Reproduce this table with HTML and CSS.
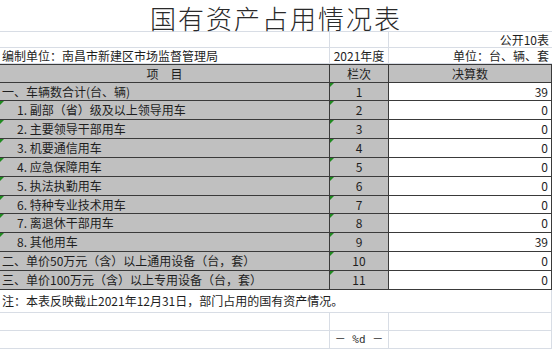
FILE: index.html
```html
<!DOCTYPE html>
<html lang="zh-CN">
<head>
<meta charset="utf-8">
<title>国有资产占用情况表</title>
<link rel="stylesheet" href="styles.css">
</head>
<body>
<div class="sheet">
  <div class="title">国有资产占用情况表</div>

  <div class="row light h16">
    <div class="c1"></div>
    <div class="c2 lv"></div>
    <div class="c3 lv right">公开10表</div>
  </div>
  <div class="row light h16">
    <div class="c1 left">编制单位：南昌市新建区市场监督管理局</div>
    <div class="c2 lv center">2021年度</div>
    <div class="c3 lv right">单位：台、辆、套</div>
  </div>

  <div class="row head h18">
    <div class="c1 center gray">项　目</div>
    <div class="c2 dv center gray">栏次</div>
    <div class="c3 dv center gray">决算数</div>
  </div>

  <div class="row data h18">
    <div class="c1 gray left">一、车辆数合计(台、辆)</div>
    <div class="c2 dv gray center mark">1</div>
    <div class="c3 dv num">39</div>
  </div>
  <div class="row data h19">
    <div class="c1 gray sub mark">1. 副部（省）级及以上领导用车</div>
    <div class="c2 dv gray center mark">2</div>
    <div class="c3 dv num">0</div>
  </div>
  <div class="row data h19">
    <div class="c1 gray sub mark">2. 主要领导干部用车</div>
    <div class="c2 dv gray center mark">3</div>
    <div class="c3 dv num">0</div>
  </div>
  <div class="row data h19">
    <div class="c1 gray sub mark">3. 机要通信用车</div>
    <div class="c2 dv gray center mark">4</div>
    <div class="c3 dv num">0</div>
  </div>
  <div class="row data h19">
    <div class="c1 gray sub mark">4. 应急保障用车</div>
    <div class="c2 dv gray center mark">5</div>
    <div class="c3 dv num">0</div>
  </div>
  <div class="row data h19">
    <div class="c1 gray sub mark">5. 执法执勤用车</div>
    <div class="c2 dv gray center mark">6</div>
    <div class="c3 dv num">0</div>
  </div>
  <div class="row data h18">
    <div class="c1 gray sub mark">6. 特种专业技术用车</div>
    <div class="c2 dv gray center mark">7</div>
    <div class="c3 dv num">0</div>
  </div>
  <div class="row data h19">
    <div class="c1 gray sub mark">7. 离退休干部用车</div>
    <div class="c2 dv gray center mark">8</div>
    <div class="c3 dv num">0</div>
  </div>
  <div class="row data h19">
    <div class="c1 gray sub mark">8. 其他用车</div>
    <div class="c2 dv gray center mark">9</div>
    <div class="c3 dv num">39</div>
  </div>
  <div class="row data h19">
    <div class="c1 gray left">二、单价50万元（含）以上通用设备（台，套）</div>
    <div class="c2 dv gray center mark">10</div>
    <div class="c3 dv num">0</div>
  </div>
  <div class="row data h19">
    <div class="c1 gray left">三、单价100万元（含）以上专用设备（台，套）</div>
    <div class="c2 dv gray center mark">11</div>
    <div class="c3 dv num">0</div>
  </div>

  <div class="row note h23">
    <div class="span left">注：本表反映截止2021年12月31日，部门占用的国有资产情况。</div>
  </div>
  <div class="row light h18">
    <div class="c1"></div>
    <div class="c2 lv"></div>
    <div class="c3 lv lr"></div>
  </div>
  <div class="row light h18">
    <div class="c1"></div>
    <div class="c2 lv center page">－ %d －</div>
    <div class="c3 lv lr"></div>
  </div>
</div>
</body>
</html>
```

FILE: styles.css
```css
html, body {
  margin: 0;
  padding: 0;
  background: #ffffff;
}

body {
  font-family: "Noto Sans CJK SC", "DejaVu Sans", sans-serif;
  font-size: 12px;
  color: #1e1e1e;
}

.sheet {
  width: 553px;
}

.title {
  height: 32px;
  box-sizing: border-box;
  border-bottom: 1px solid #d8dde5;
  text-align: center;
  font-size: 26px;
  font-weight: 300;
  line-height: 36px;
  color: #2a2a2a;
  letter-spacing: 2px;
  width: 552px;
  white-space: nowrap;
}

.row {
  display: grid;
  grid-template-columns: 329px 59px 164px;
  box-sizing: border-box;
  width: 552px;
}

.h16 { height: 16px; line-height: 15px; }
.h18 { height: 18px; line-height: 17px; }
.h19 { height: 19px; line-height: 18px; }
.h23 { height: 23px; line-height: 22px; }

.row.light {
  border-bottom: 1px solid #d8dde5;
}

.row.head {
  border-top: 1px solid #3a3a3a;
  border-bottom: 1px solid #3a3a3a;
  height: 19px;
}

.row.data {
  border-bottom: 1px solid #3a3a3a;
}

.row.note {
  display: block;
  border-bottom: 1px solid #d8dde5;
  border-right: 1px solid #d8dde5;
}

.c1, .c2, .c3, .span {
  position: relative;
  white-space: nowrap;
  overflow: visible;
}

.lv { border-left: 1px solid #d8dde5; }
.lr { border-right: 1px solid #d8dde5; }
.dv { border-left: 1px solid #3a3a3a; }

.row.data .c3, .row.head .c3 { border-right: 1px solid #3a3a3a; }

.gray { background: #c0c0c0; }

.left { padding-left: 2px; }
.sub { padding-left: 17px; }
.center { text-align: center; }
.right { text-align: right; padding-right: 3px; }
.num { text-align: right; padding-right: 3px; }

.page {
  font-family: "DejaVu Sans Mono", "Noto Sans CJK SC", monospace;
  font-size: 11px;
  color: #333;
}

.mark::before {
  content: "";
  position: absolute;
  left: 0;
  top: 0;
  width: 0;
  height: 0;
  border-top: 4px solid #1f8a1f;
  border-right: 4px solid transparent;
}
```
